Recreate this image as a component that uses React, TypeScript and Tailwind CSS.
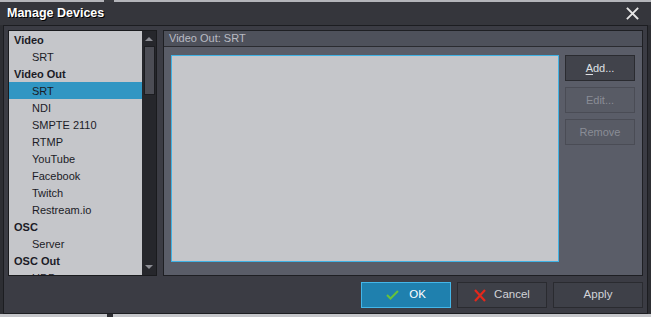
import React from "react";

const items: { label: string; header?: boolean; selected?: boolean }[] = [
  { label: "Video", header: true },
  { label: "SRT" },
  { label: "Video Out", header: true },
  { label: "SRT", selected: true },
  { label: "NDI" },
  { label: "SMPTE 2110" },
  { label: "RTMP" },
  { label: "YouTube" },
  { label: "Facebook" },
  { label: "Twitch" },
  { label: "Restream.io" },
  { label: "OSC", header: true },
  { label: "Server" },
  { label: "OSC Out", header: true },
  { label: "UDP" },
];

const font = { fontFamily: '"Liberation Sans", Arial, sans-serif' };

export default function App() {
  return (
    <div
      className="w-[651px] h-[317px] bg-[#2d2e33] flex flex-col overflow-hidden"
      style={font}
    >
      <div className="h-[2px] bg-[#b4b5ba] flex">
        <div className="w-[104px]" />
        <div className="w-[10px] bg-[#3a3b40]" />
      </div>
      <div className="h-[23px] bg-[#35363c] flex items-center justify-between pl-[7px] pr-[12px]">
        <span className="text-white font-bold text-[12.5px] [text-shadow:1px_1px_0_#000]">
          Manage Devices
        </span>
        <svg width="13" height="13" viewBox="0 0 13 13">
          <path d="M1.5 1.5 L11.5 11.5 M11.5 1.5 L1.5 11.5" stroke="#e6e6e6" strokeWidth="1.8" strokeLinecap="square" />
        </svg>
      </div>
      <div className="mx-[3px] h-[289px] border border-[#1c1d21] bg-[#3b3c44] flex flex-col pl-[4px] pr-[3px] pt-[4px] pb-[5px]">
        <div className="flex h-[246px] gap-[6px]">
          {/* Left list */}
          <div className="w-[149px] h-full border border-[#1a1b1e] flex">
            <div className="w-[133px] bg-[#c5c6ca] overflow-hidden">
              {items.map((it, i) => (
                <div
                  key={i}
                  className={`h-[17px] flex items-center pt-[1px] text-[11px] leading-none text-[#1b1b26] ${
                    it.header ? "font-bold pl-[5px]" : "pl-[23px]"
                  } ${it.selected ? "bg-[#3196c3]" : ""}`}
                >
                  {it.label}
                </div>
              ))}
            </div>
            <div className="flex-1 bg-[#26272c] flex flex-col items-center">
              <svg width="10" height="8" viewBox="0 0 10 8" className="mt-[4px]">
                <path d="M1 6 L5 2 L9 6 Z" fill="#8c8d94" />
              </svg>
              <div className="mt-[3px] w-[11px] h-[49px] bg-[#4c4d55] border border-[#1c1d21]" />
              <div className="flex-1" />
              <svg width="10" height="8" viewBox="0 0 10 8" className="mb-[4px]">
                <path d="M1 2 L5 6 L9 2 Z" fill="#8c8d94" />
              </svg>
            </div>
          </div>
          {/* Right panel */}
          <div className="w-[480px] h-full border border-[#1e1f23] bg-[#5a5d68] flex flex-col">
            <div className="h-[16px] bg-[#4e515b] border-b border-[#2a2b30] flex items-center pl-[5px] text-[11px] text-[#b9bbc3]">
              Video Out: SRT
            </div>
            <div className="flex pl-[7px] pr-[7px] pt-[8px] gap-[6px]">
              <div className="w-[388px] h-[207px] bg-[#c5c6ca] border border-[#40b2e4]" />
              <div className="flex flex-col gap-[6px]">
                <div className="w-[70px] h-[26px] bg-[#41434b] border border-[#2a2b30] flex items-center justify-center text-[11px] text-[#dfe0e4]">
                  <span>
                    <span className="underline underline-offset-2">A</span>dd...
                  </span>
                </div>
                <div className="w-[70px] h-[26px] bg-[#585b65] border border-[#4a4c55] flex items-center justify-center text-[11px] text-[#8a8d96]">
                  Edit...
                </div>
                <div className="w-[70px] h-[26px] bg-[#585b65] border border-[#4a4c55] flex items-center justify-center text-[11px] text-[#8a8d96]">
                  Remove
                </div>
              </div>
            </div>
          </div>
        </div>
        <div className="flex justify-end gap-[6px] mt-[6px] mr-[1px]">
          <div className="w-[90px] h-[26px] bg-[#1f80ae] border border-[#44b6e8] flex items-center justify-center gap-[10px] text-[11.5px] text-white">
            <svg width="13" height="10" viewBox="0 0 13 10">
              <path d="M1 5 L4.5 8.5 L12 1" stroke="#67c23a" strokeWidth="2" fill="none" />
            </svg>
            <span>OK</span>
          </div>
          <div className="w-[90px] h-[26px] bg-[#3e4048] border border-[#2a2b30] flex items-center justify-center gap-[8px] text-[11.5px] text-[#d2d3d8]">
            <svg width="12" height="13" viewBox="0 0 12 13">
              <path d="M1 1 L11 12 M11 1 L1 12" stroke="#e3281c" strokeWidth="2.2" />
            </svg>
            <span>Cancel</span>
          </div>
          <div className="w-[90px] h-[26px] bg-[#3e4048] border border-[#2a2b30] flex items-center justify-center text-[11.5px] text-[#d2d3d8]">
            Apply
          </div>
        </div>
      </div>
      <div className="flex-1 bg-[#c5c6ca] flex">
        <div className="w-[107px]" />
        <div className="w-[6px] bg-[#2d2e33]" />
      </div>
    </div>
  );
}
